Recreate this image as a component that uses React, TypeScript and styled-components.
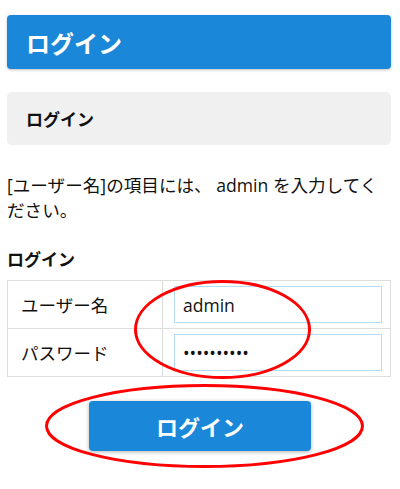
import React from 'react'
import styled, { createGlobalStyle } from 'styled-components'

const GlobalStyle = createGlobalStyle`
  html, body {
    margin: 0;
    padding: 0;
    background: #ffffff;
  }
  body {
    font-family: "Open Sans", "Noto Sans CJK JP", sans-serif;
    color: #111;
  }
  * {
    box-sizing: border-box;
  }
`

const Page = styled.div`
  position: relative;
  width: 400px;
  height: 489px;
  padding: 15px 9px 0 7px;
  display: flex;
  flex-direction: column;
`

const Header = styled.div`
  height: 54px;
  background: #1a87d8;
  border-radius: 4px;
  box-shadow: 0 1px 3px rgba(0, 0, 0, 0.25);
  display: flex;
  align-items: center;
  padding-left: 19px;
  color: #fff;
  font-family: "Noto Sans CJK JP", sans-serif;
  font-size: 24px;
  font-weight: 700;
`

const SubTitle = styled.div`
  margin-top: 23px;
  height: 53px;
  background: #f0f0f0;
  border-radius: 5px;
  display: flex;
  align-items: center;
  padding-left: 19px;
  font-family: "Noto Sans CJK JP", sans-serif;
  font-size: 17px;
  font-weight: 700;
`

const Note = styled.p`
  margin: 28px 0 0;
  font-size: 17.6px;
  line-height: 25px;
`

const FormTitle = styled.h3`
  margin: 24px 0 0;
  font-family: "Noto Sans CJK JP", sans-serif;
  font-size: 17px;
  line-height: 24px;
  font-weight: 700;
`

const Table = styled.table`
  margin-top: 9px;
  width: 384px;
  border-collapse: collapse;
`

const LabelCell = styled.td`
  width: 155px;
  height: 48px;
  border: 1px solid #dddddd;
  padding: 0 0 0 13px;
  font-family: "Noto Sans CJK JP", sans-serif;
  font-size: 17.5px;
  vertical-align: middle;
`

const InputCell = styled.td`
  border: 1px solid #dddddd;
  padding: 0 8px 0 11px;
  vertical-align: middle;
`

const Field = styled.input`
  display: block;
  width: 100%;
  height: 37px;
  border: 1px solid #b7dcf5;
  border-radius: 0;
  padding: 0 8px;
  font-family: "Open Sans", sans-serif;
  font-size: 17.5px;
  color: #111;
  background: #fff;
  outline: none;
`

const ButtonRow = styled.div`
  margin-top: 24px;
  display: flex;
  justify-content: center;
  padding-left: 2px;
`

const LoginButton = styled.button`
  width: 222px;
  height: 50px;
  background: #1a87d8;
  border: none;
  border-radius: 4px;
  box-shadow: 0 1px 4px rgba(0, 0, 0, 0.3);
  color: #fff;
  font-family: "Noto Sans CJK JP", sans-serif;
  font-size: 22px;
  font-weight: 700;
`

const Marks = styled.svg`
  position: absolute;
  left: 0;
  top: 0;
  pointer-events: none;
`

const App: React.FC = () => {
  return (
    <>
      <GlobalStyle />
      <Page>
        <Header>ログイン</Header>
        <SubTitle>ログイン</SubTitle>
        <Note>[ユーザー名]の項目には、 admin を入力してください。</Note>
        <FormTitle>ログイン</FormTitle>
        <Table>
          <tbody>
            <tr>
              <LabelCell>ユーザー名</LabelCell>
              <InputCell>
                <Field type="text" defaultValue="admin" />
              </InputCell>
            </tr>
            <tr>
              <LabelCell>パスワード</LabelCell>
              <InputCell>
                <Field type="password" defaultValue="password12" />
              </InputCell>
            </tr>
          </tbody>
        </Table>
        <ButtonRow>
          <LoginButton>ログイン</LoginButton>
        </ButtonRow>
        <Marks width="400" height="489" viewBox="0 0 400 489">
          <ellipse cx="222.5" cy="329.5" rx="87" ry="48" fill="none" stroke="#f00" strokeWidth="3" />
          <ellipse cx="204.5" cy="426" rx="158" ry="40.5" fill="none" stroke="#f00" strokeWidth="3" />
        </Marks>
      </Page>
    </>
  )
}

export default App
